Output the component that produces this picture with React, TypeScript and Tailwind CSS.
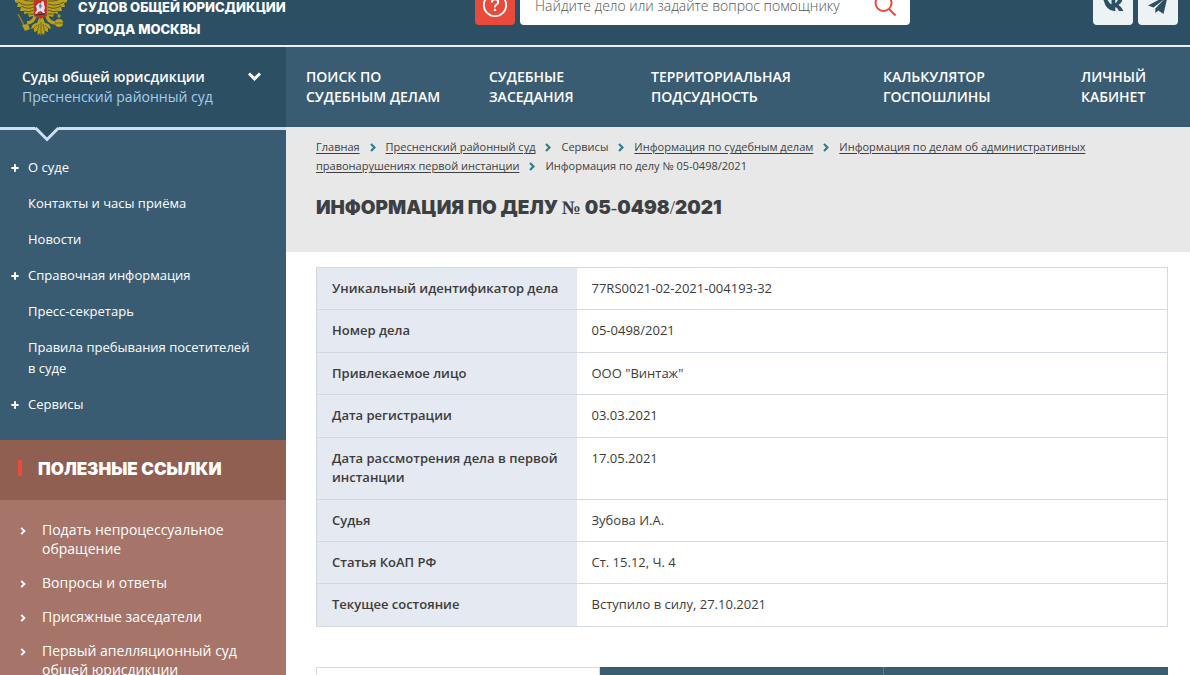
import React from 'react';
import { Plus } from 'lucide-react';

interface MenuItem {
  label: string;
  expandable?: boolean;
}

const mainNav = [
  ['Поиск по', 'судебным делам'],
  ['Судебные', 'заседания'],
  ['Территориальная', 'подсудность'],
  ['Калькулятор', 'госпошлины'],
  ['Личный', 'кабинет'],
];

const courtMenu: MenuItem[] = [
  { label: 'О суде', expandable: true },
  { label: 'Контакты и часы приёма' },
  { label: 'Новости' },
  { label: 'Справочная информация', expandable: true },
  { label: 'Пресс-секретарь' },
  { label: 'Правила пребывания посетителей в суде' },
  { label: 'Сервисы', expandable: true },
];

const usefulLinks = [
  'Подать непроцессуальное обращение',
  'Вопросы и ответы',
  'Присяжные заседатели',
  'Первый апелляционный суд общей юрисдикции',
];

const breadcrumbs = [
  { label: 'Главная', link: true },
  { label: 'Пресненский районный суд', link: true },
  { label: 'Сервисы', link: false },
  { label: 'Информация по судебным делам', link: true },
  { label: 'Информация по делам об административных правонарушениях первой инстанции', link: true },
  { label: 'Информация по делу № 05-0498/2021', link: false },
];

const caseRows = [
  ['Уникальный идентификатор дела', '77RS0021-02-2021-004193-32'],
  ['Номер дела', '05-0498/2021'],
  ['Привлекаемое лицо', 'ООО "Винтаж"'],
  ['Дата регистрации', '03.03.2021'],
  ['Дата рассмотрения дела в первой инстанции', '17.05.2021'],
  ['Судья', 'Зубова И.А.'],
  ['Статья КоАП РФ', 'Ст. 15.12, Ч. 4'],
  ['Текущее состояние', 'Вступило в силу, 27.10.2021'],
];

const Chevron = ({ className }: { className: string }) => (
  <svg viewBox="0 0 6 9" className={className} fill="none" stroke="currentColor" strokeWidth="2.2">
    <path d="M1 1l3.5 3.5L1 8" />
  </svg>
);

const Emblem = () => (
  <svg width="54" height="60" viewBox="0 0 54 60" className="shrink-0">
    {/* wings */}
    <path
      d="M21 12L2 10Q0 18 1 26l3 1-1 4 4 0-1 4 4 0 0 3 4-1 1 4 4-1 2 2zM33 12l19-2q2 8 1 16l-3 1 1 4-4 0 1 4-4 0 0 3-4-1-1 4-4-1-2 2z"
      fill="#b8a11c"
    />
    <g fill="none" stroke="#625a26" strokeWidth="1">
      <path d="M20 25Q10 26 3 20M20 28Q12 31 4 26M20 31Q14 34 7 30M20 34Q15 37 10 35M20 38l-5 0" />
      <path d="M34 25q10 1 17-5M34 28q8 3 16-2M34 31q6 3 13-1M34 34q5 3 10 1M34 38l5 0" />
    </g>
    {/* legs with sceptre and orb */}
    <path d="M21 40q-1 6-8 7M33 40q1 6 8 7" fill="none" stroke="#b8a11c" strokeWidth="3.4" />
    <path d="M4 38l8 15" stroke="#9c8420" strokeWidth="1.4" />
    <path d="M8 49l3 6 5-2-2-5z" fill="#b8a11c" />
    <circle cx="45" cy="47" r="4" fill="#b8a11c" />
    <path d="M45 42v-4M43 40h4" stroke="#b8a11c" strokeWidth="1.2" />
    <path d="M41 47h8" stroke="#625a26" strokeWidth=".8" />
    {/* tail */}
    <path d="M25 42h4l2 5q5 0 6 6l-3-1 0 4-3-1-1 4-2-2-1 3-1-3-2 2-1-4-3 1 0-4-3 1q1-6 6-6z" fill="#b8a11c" />
    <path d="M27 46v13M25 48l-2 9M29 48l2 9M23 49l-4 4M31 49l4 4" stroke="#625a26" strokeWidth=".8" />
    {/* shield */}
    <path d="M20 24h13v16l-4 1-2.500 2-2.500-2-4-1z" fill="#cf2b25" stroke="#8a6a20" strokeWidth=".6" />
    <path d="M22 30l3-3 2 0 1-2 2 1 0 2 1 4-1 2 1 3-2 0-2-2-3 1-1 2-2-1 2-3z" fill="#dfe5ee" />
    <path d="M26 27l2 3-2 3-1-3z" fill="#5f7fb5" />
    <path d="M22 39l9-1" stroke="#332c2a" strokeWidth="1.2" />
  </svg>
);

const TopBar = () => (
  <header className="flex h-[47px] items-end overflow-hidden border-b-2 border-[#e9f0f5] bg-[#2c4f63]">
    <a href="#" className="flex h-full w-[475px] items-end pl-[14px] text-white">
      <span className="shrink-0 pb-[9px]">
        <Emblem />
      </span>
      <span className="ml-[10px] block pb-[5px] font-['Inter'] text-[13px] font-extrabold uppercase leading-[22px]">
        Судов общей юрисдикции
        <br />
        города Москвы
      </span>
    </a>
    <div className="flex flex-1 items-end gap-[5px] pb-5">
      <button aria-label="Помощь" className="flex h-10 w-10 shrink-0 items-center justify-center rounded bg-[#e84a3c] text-white">
        <svg width="26" height="26" viewBox="0 0 26 26" fill="none" stroke="currentColor">
          <circle cx="13" cy="13" r="11.2" strokeWidth="1.8" />
          <path d="M9.800 10.500q0-3.300 3.200-3.300t3.200 2.900q0 1.600-1.700 2.600T13 15.300" strokeWidth="2" />
          <path d="M13 16.800v2.200" strokeWidth="2.200" />
        </svg>
      </button>
      <form className="flex h-10 w-[390px] items-center rounded bg-white pr-3">
        <input
          type="text"
          aria-label="Поиск"
          placeholder="Найдите дело или задайте вопрос помощнику"
          className="h-10 min-w-0 flex-1 pl-[15px] text-sm font-light text-[#555555] outline-none placeholder:text-[#555555]"
        />
        <button type="button" aria-label="Найти" className="text-[#e84a3c]">
          <svg width="26" height="26" viewBox="0 0 26 26" fill="none" stroke="currentColor" strokeWidth="2">
            <circle cx="11.500" cy="11" r="8" />
            <path d="M17 17l6.500 6.500" />
          </svg>
        </button>
      </form>
    </div>
    <div className="flex gap-[5px] pb-5 pr-3">
      <a href="#" aria-label="ВКонтакте" className="flex h-10 w-10 items-center justify-center rounded bg-[#edf2f5]">
        <svg width="22" height="22" viewBox="0 0 22 22" fill="#2c4f63">
          <path d="M1 4h4q1.500 5 4.500 6.500V4h3.800v5.300Q15.500 8 16.500 4H21q-1 5-4.500 7 3.500 1.800 5 6h-4.500q-1.200-3-3.700-3.900V17H12Q3.500 16.500 1 4z" />
        </svg>
      </a>
      <a href="#" aria-label="Telegram" className="flex h-10 w-10 items-center justify-center rounded bg-[#edf2f5]">
        <svg width="22" height="22" viewBox="0 0 22 22" fill="#2c4f63">
          <path d="M21 1L1 11.500l5.500 2L17.500 5 8.300 14.500V19l3-2.500L16.500 20z" />
        </svg>
      </a>
    </div>
  </header>
);

const Sidebar = () => (
  <aside className="w-[286px] shrink-0 bg-[#a67469] text-white">
    <div className="relative h-[83px] border-b-[3px] border-[#cfdff2] bg-[#2c4f63]">
      <button className="flex w-full items-start justify-between pl-[22px] pr-[25px] pt-5 text-left text-sm leading-5">
        <span>
          <span className="block font-semibold">Суды общей юрисдикции</span>
          <span className="block text-[#a5cdf0]">Пресненский районный суд</span>
        </span>
        <svg width="13" height="9" viewBox="0 0 13 9" fill="none" stroke="currentColor" strokeWidth="3" className="mt-[5px]">
          <path d="M1 1.500l5.500 5.300L12 1.500" />
        </svg>
      </button>
      <svg width="24" height="15" viewBox="0 0 24 15" className="absolute left-[35px] top-20">
        <path d="M0 0h24L12 12z" fill="#2c4f63" />
        <path d="M0.500 1L12 12.500 23.500 1" fill="none" stroke="#cfdff2" strokeWidth="3" />
      </svg>
    </div>

    <ul className="flex flex-col gap-[15px] bg-[#395c73] pb-[25px] pt-[27px] text-[13px] leading-[21px]">
      {courtMenu.map((item) => (
        <li key={item.label} className="flex items-start pl-[10px] pr-[30px]">
          <span className="flex h-[21px] w-[18px] shrink-0 items-center">
            {item.expandable && <Plus size={10} strokeWidth={5} />}
          </span>
          <a href="#">{item.label}</a>
        </li>
      ))}
    </ul>

    <div className="flex h-[60px] items-center bg-[#915f52] pl-[18px]">
      <span className="mb-1 h-4 w-1 bg-[#e84a3c]" />
      <h2 className="ml-4 font-['Inter'] text-[17px] font-black uppercase">Полезные ссылки</h2>
    </div>
    <ul className="flex flex-col gap-[15px] py-5 text-sm leading-[19px]">
      {usefulLinks.map((label) => (
        <li key={label} className="flex items-start pl-5 pr-8">
          <Chevron className="mt-[7px] h-2 w-[6px] shrink-0" />
          <a href="#" className="ml-4">{label}</a>
        </li>
      ))}
    </ul>
  </aside>
);

const PageHead = () => (
  <div className="h-[125px] bg-[#e8e8e8] px-[30px] pt-[10px] text-[#3b4143]">
    <nav className="text-[11px] leading-[19px]">
      {breadcrumbs.map((crumb, i) => (
        <React.Fragment key={crumb.label}>
          {i > 0 && <Chevron className="mx-[10px] mb-[2px] inline h-[9px] w-[6px] text-[#2b7f8f]" />}
          {crumb.link ? <a href="#" className="underline underline-offset-2">{crumb.label}</a> : <span>{crumb.label}</span>}
        </React.Fragment>
      ))}
    </nav>
    <h1 className="mt-[19px] font-['Inter'] text-[19px] font-black uppercase leading-7">
      Информация по делу <span className="font-['Liberation_Serif'] font-bold">№</span> 05
      <span className="font-['Liberation_Serif'] font-normal">-</span>0498
      <span className="font-['Liberation_Serif'] font-normal">/</span>2021
    </h1>
  </div>
);

const App: React.FC = () => {
  return (
    <div className="flex h-screen flex-col overflow-hidden bg-white font-['Open_Sans','Noto_Sans',sans-serif]">
      <TopBar />
      <div className="flex min-h-0 flex-1">
        <Sidebar />
        <main className="min-w-0 flex-1">
          <nav className="grid h-20 grid-cols-[183fr_162fr_232fr_198fr_109fr] bg-[#395c73] pl-5 pt-5 text-sm font-semibold uppercase leading-5 text-white">
            {mainNav.map(([first, second]) => (
              <a href="#" key={first}>
                {first}
                <br />
                {second}
              </a>
            ))}
          </nav>
          <PageHead />
          <div className="pl-[30px] pr-[22px] pt-[15px]">
            <table className="h-[360px] w-full border-collapse border border-[#d3d9e0] text-[13px] leading-[19px] text-[#3c3c3c]">
              <tbody>
                {caseRows.map(([label, value]) => (
                  <tr key={label} className="border-b border-[#d3d9e0] align-top">
                    <th scope="row" className="w-[260px] bg-[#e4e9f2] px-[15px] py-[11px] text-left font-semibold">{label}</th>
                    <td className="px-[15px] py-[11px]">{value}</td>
                  </tr>
                ))}
              </tbody>
            </table>
            <div className="mt-10 grid h-12 grid-cols-3">
              <button aria-label="Судебные заседания" className="border border-[#d3d9e0] bg-white" />
              <button aria-label="Судебные акты" className="border-r border-[#5d7d93] bg-[#395c73]" />
              <button aria-label="История состояний" className="bg-[#395c73]" />
            </div>
          </div>
        </main>
      </div>
    </div>
  );
};

export default App;
